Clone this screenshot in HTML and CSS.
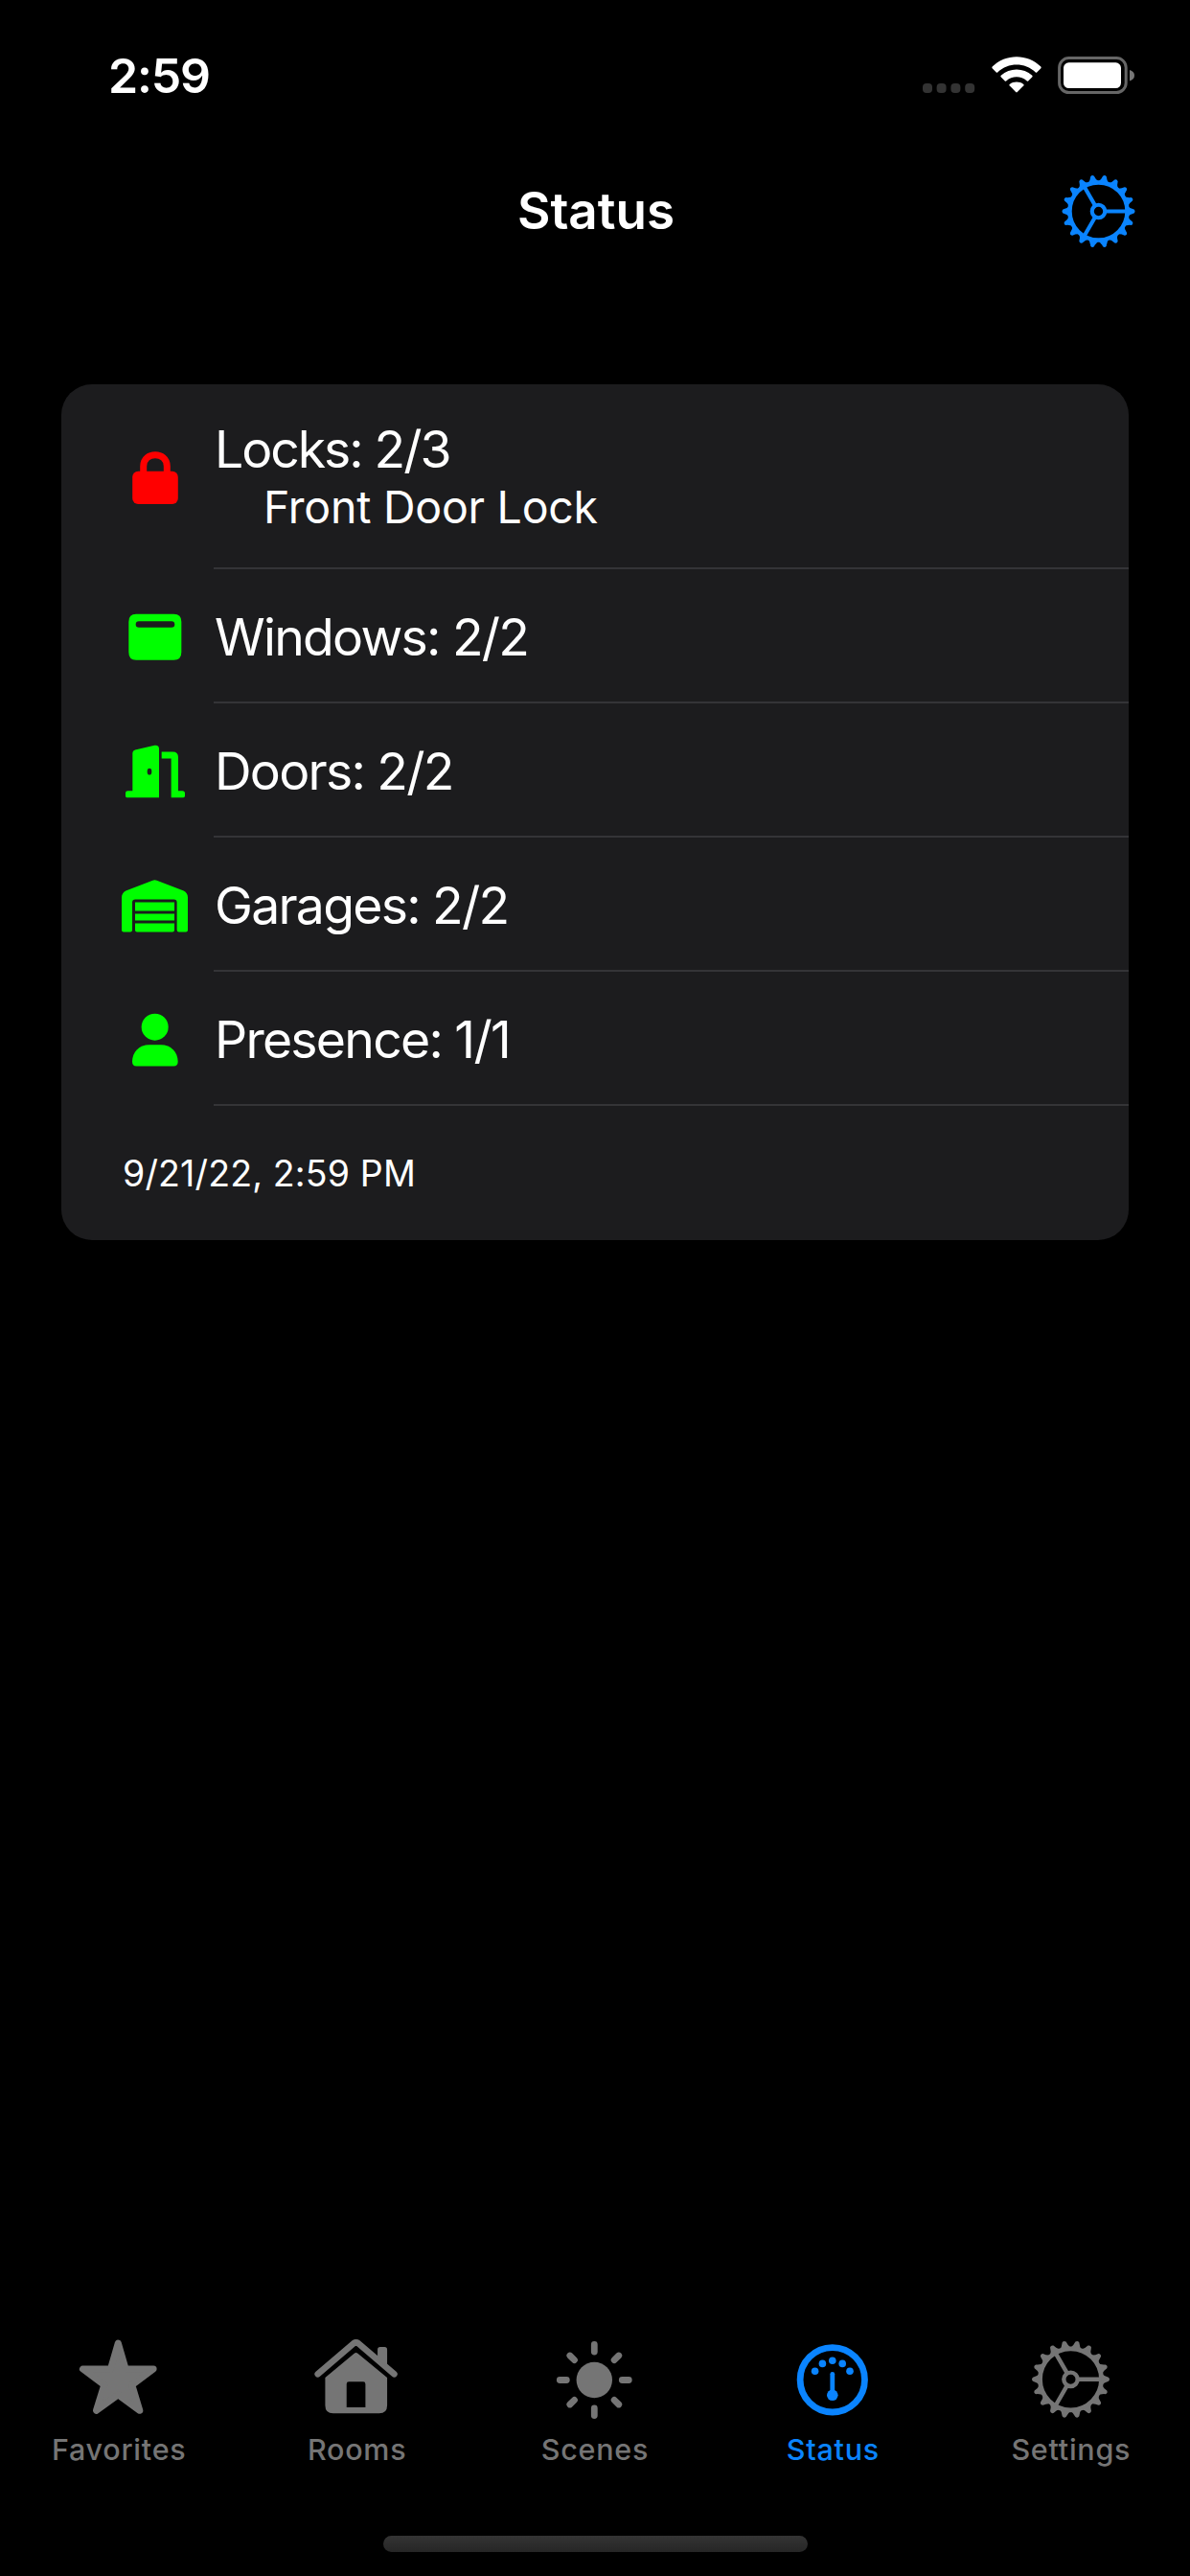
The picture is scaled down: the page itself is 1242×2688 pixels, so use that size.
FILE: index.html
```
<!DOCTYPE html>
<html lang="en">
<head>
  <meta charset="UTF-8">
  <title>Status</title>
  <link rel="stylesheet" href="styles.css">
</head>
<body>
  <svg width="0" height="0" class="defs">
    <symbol id="gear" viewBox="-41 -41 82 82">
      <g id="teeth" fill="currentColor">
        <g id="t3">
          <path id="tooth" d="M32 -6.5 Q35 -3 39.5 -2 Q41.5 0 39.5 2 Q35 3 32 6.5z"/>
          <use href="#tooth" transform="rotate(20)"/>
          <use href="#tooth" transform="rotate(40)"/>
        </g>
        <use href="#t3" transform="rotate(60)"/>
        <use href="#t3" transform="rotate(120)"/>
        <use href="#t3" transform="rotate(180)"/>
        <use href="#t3" transform="rotate(240)"/>
        <use href="#t3" transform="rotate(300)"/>
      </g>
      <g fill="none" stroke="currentColor">
        <circle r="32" stroke-width="4.8"/>
        <circle r="7.2" stroke-width="4.4"/>
        <path d="M8 0H32M-4 -6.9L-16 -27.7M-4 6.9L-16 27.7" stroke-width="4.4"/>
      </g>
    </symbol>
  </svg>

  <div class="status-bar">
    <span class="time">2:59</span>
    <div class="indicators">
      <svg class="dots" width="56" height="12" viewBox="0 0 56 12">
        <rect x="1" y="1" width="10" height="10" rx="4"/>
        <rect x="15.6" y="1" width="10" height="10" rx="4"/>
        <rect x="30.4" y="1" width="10" height="10" rx="4"/>
        <rect x="45.2" y="1" width="10" height="10" rx="4"/>
      </svg>
      <svg class="wifi" width="52" height="40" viewBox="0 0 52 40">
        <path d="M.6 12.2Q0 11.4.7 10.6C14.5-3.2 37.5-3.2 51.3 10.6Q52 11.4 51.4 12.2L47.2 16.4Q46.5 17 45.8 16.4C34.5 6 17.5 6 6.2 16.4Q5.5 17 4.8 16.4Z"/>
        <path d="M9.6 21.2Q9 20.5 9.7 19.7C19 11.4 33 11.4 42.3 19.7Q43 20.5 42.4 21.2L38.2 25.4Q37.5 26 36.8 25.4C30.5 20 21.5 20 15.2 25.4Q14.5 26 13.8 25.4Z"/>
        <path d="M18.6 30.2Q18 29.5 18.7 28.9C23 25.7 29 25.7 33.3 28.9Q34 29.5 33.4 30.2L26.8 37Q26 37.8 25.2 37Z"/>
      </svg>
      <svg class="battery" width="82" height="40" viewBox="0 0 82 40">
        <rect x="1.6" y="1.6" width="69.6" height="36" rx="10" fill="none" stroke="#666" stroke-width="3"/>
        <rect x="6" y="6.3" width="60" height="26.7" rx="5.5" fill="#fff"/>
        <path d="M75 14Q80 15.5 80 19.7T75 25.5Z" fill="#777"/>
      </svg>
    </div>
  </div>

  <div class="nav-bar">
    <h1>Status</h1>
    <svg class="nav-gear"><use href="#gear"/></svg>
  </div>

  <div class="card">
    <div class="row tall">
      <svg class="icon red" viewBox="0 0 70 60">
        <rect x="11.2" y="23.7" width="47.6" height="34.3" rx="6"/>
        <path d="M22.7 26V18.5C22.7 2.8 47.3 2.8 47.3 18.5V26" fill="none" stroke="currentColor" stroke-width="7"/>
      </svg>
      <div class="text">
        <p class="label locks">Locks: 2/3</p>
        <p class="detail">Front Door Lock</p>
      </div>
    </div>
    <div class="row">
      <svg class="icon" viewBox="51 100.5 210 180">
        <path fill-rule="evenodd" d="M96 121H214Q238 121 238 145V240Q238 265 214 265H96Q73 265 73 240V145Q73 121 96 121ZM105 143Q95 143 95 153T105 163H207Q217 163 217 153T207 143Z"/>
      </svg>
      <div class="text"><p class="label">Windows: 2/2</p></div>
    </div>
    <div class="row">
      <svg class="icon" viewBox="51 520.5 210 180">
        <path fill-rule="evenodd" d="M85 674V556Q85 548 93 546L154 532Q168 530 168 543V695H67Q63 695 63 690V681Q63 674 70 674ZM138 604Q131 604 131 614T138 624T145 614T138 604Z"/>
        <path d="M176 552H211Q228 552 228 569V674H241Q249 674 249 682V690Q249 695 244 695H206V573H176Z"/>
      </svg>
      <div class="text"><p class="label">Doors: 2/2</p></div>
    </div>
    <div class="row">
      <svg class="icon" viewBox="51 160.5 210 180">
        <path d="M51 330V228Q51 214 64 207L148 175Q154 172 161 175L245 207Q258 214 258 228V330Q258 336 252 336H230Q224 336 224 330V244Q224 234 214 234H94Q84 234 84 244V330Q84 336 78 336H57Q51 336 51 330Z"/>
        <path d="M93 243H216V270H93ZM93 279H216V300H93ZM93 309H216V330Q216 336 210 336H99Q93 336 93 330Z"/>
      </svg>
      <div class="text"><p class="label">Garages: 2/2</p></div>
    </div>
    <div class="row">
      <svg class="icon" viewBox="51 580.5 210 180">
        <circle cx="155" cy="633.5" r="42"/>
        <path d="M84 742C84 711 107 689 137 689H174C204 689 227 711 227 742Q227 756 214 756H97Q84 756 84 742Z"/>
      </svg>
      <div class="text"><p class="label">Presence: 1/1</p></div>
    </div>
    <div class="footer">9/21/22, 2:59 PM</div>
  </div>

  <div class="tab-bar">
    <div class="tab">
      <svg viewBox="147.6 84 270 270">
        <path d="M280.5 105L304 186H391L324 236L348 316L280.5 267L212 316L237 236L170 186H257Z" stroke="currentColor" stroke-width="21" stroke-linejoin="round"/>
      </svg>
      <span>Favorites</span>
    </div>
    <div class="tab">
      <svg viewBox="892.8 84 270 270">
        <path d="M904 202L1016 106Q1023.5 101 1031 106L1143 202" fill="none" stroke="currentColor" stroke-width="20" stroke-linecap="round"/>
        <path d="M1091 155V125Q1091 117 1099 117H1113Q1121 117 1121 125V180Z"/>
        <path fill-rule="evenodd" d="M1018 137Q1023.5 133 1029 137L1121 213V300Q1121 325 1096 325H952Q927 325 927 300V213ZM1001 226Q994 226 994 233V306H1053V233Q1053 226 1046 226Z"/>
      </svg>
      <span>Rooms</span>
    </div>
    <div class="tab">
      <svg viewBox="0 0 90 90">
        <circle cx="44.3" cy="45.5" r="18.7"/>
        <g transform="translate(44.3 45.5)" stroke="currentColor" stroke-width="6.8" stroke-linecap="round">
          <path d="M0 -37V-29.5M0 37V29.5M-36 0H-29M36 0H29M-25.5 -25.5L-20.8 -20.8M25.5 -25.5L20.8 -20.8M-25.5 25.5L-20.8 20.8M25.5 25.5L20.8 20.8"/>
        </g>
      </svg>
      <span>Scenes</span>
    </div>
    <div class="tab active">
      <svg viewBox="0 0 90 90">
        <g transform="translate(44.8 45.3)">
          <circle r="33.7" fill="none" stroke="currentColor" stroke-width="6.8"/>
          <circle cx="-18.2" cy="-9" r="3.8"/>
          <circle cx="-10.4" cy="-16.9" r="3.8"/>
          <circle cx="0" cy="-20" r="3.8"/>
          <circle cx="10.4" cy="-16.9" r="3.8"/>
          <circle cx="18.2" cy="-9" r="3.8"/>
          <circle cx="0" cy="16" r="5.8"/>
          <path d="M0 -6V14" stroke="currentColor" stroke-width="4.8" stroke-linecap="round"/>
        </g>
      </svg>
      <span>Status</span>
    </div>
    <div class="tab">
      <svg viewBox="0 0 90 90"><use href="#gear" x="3.5" y="3.8" width="82" height="82"/></svg>
      <span>Settings</span>
    </div>
  </div>

  <div class="home-indicator"></div>
</body>
</html>
```
FILE: styles.css
```
body {
  margin: 0;
  width: 1242px;
  height: 2688px;
  background: #000;
  color: #fff;
  font-family: Inter, "Liberation Sans", sans-serif;
  display: flex;
  flex-direction: column;
  overflow: hidden;
}
h1, p {
  margin: 0;
}
svg {
  display: block;
  fill: currentColor;
  flex-shrink: 0;
}
.defs {
  position: absolute;
}
.status-bar {
  height: 138px;
  padding: 0 58px 0 113px;
  display: flex;
  justify-content: space-between;
  box-sizing: border-box;
}
.time {
  margin-top: 49px;
  font-size: 50px;
  line-height: 60px;
  font-weight: 600;
  letter-spacing: -1.2px;
}
.indicators {
  display: flex;
  align-items: flex-start;
  padding-top: 59px;
}
.dots {
  margin-top: 27px;
  color: #333;
}
.wifi {
  margin-left: 17px;
}
.battery {
  margin: 0 -2px 0 17px;
}
.nav-bar {
  height: 263px;
  display: grid;
  grid-template-columns: 1fr auto 1fr;
  align-items: start;
}
.nav-bar h1 {
  grid-column: 2;
  margin: 50px 0 0 2px;
  font-size: 53px;
  line-height: 64px;
  font-weight: 600;
}
.nav-gear {
  width: 77px;
  height: 77px;
  margin: 43.5px 57px 0 0;
  justify-self: end;
  color: #0a84ff;
}
.card {
  margin: 0 64px;
  height: 893px;
  border-radius: 32px;
  background: #1c1c1e;
  overflow: hidden;
}
.row {
  height: 140px;
  display: flex;
  align-items: center;
  padding-left: 63px;
}
.row.tall {
  height: 193px;
}
.icon {
  width: 70px;
  height: 60px;
  overflow: visible;
  color: #0f0;
}
.icon.red {
  color: #f00;
}
.text {
  flex: 1;
  height: 100%;
  margin-left: 26px;
  padding-top: 4px;
  box-sizing: border-box;
  border-bottom: 2px solid #343437;
  display: flex;
  flex-direction: column;
  justify-content: center;
}
.tall .text {
  padding-top: 1px;
}
.label {
  padding-left: 1px;
  font-size: 53.5px;
  line-height: 64px;
  letter-spacing: -1.75px;
}
.label.locks {
  letter-spacing: -2.05px;
}
.detail {
  padding-left: 52px;
  font-size: 46.5px;
  line-height: 56px;
  letter-spacing: -0.25px;
}
.footer {
  height: 142px;
  padding-left: 64px;
  font-size: 37.5px;
  line-height: 142px;
  letter-spacing: 0.15px;
}
.tab-bar {
  margin-top: auto;
  padding-bottom: 72px;
  display: flex;
}
.tab {
  flex: 1;
  display: flex;
  flex-direction: column;
  align-items: center;
  color: #757575;
}
.tab svg {
  width: 90px;
  height: 90px;
}
.tab span {
  margin-top: 10px;
  font-size: 30.5px;
  line-height: 36px;
  font-weight: 500;
  letter-spacing: 0.75px;
}
.tab.active {
  color: #0a84ff;
}
.home-indicator {
  width: 443px;
  height: 17px;
  margin: 0 auto 25px;
  border-radius: 9px;
  background: linear-gradient(#343434, #262626);
}
```
